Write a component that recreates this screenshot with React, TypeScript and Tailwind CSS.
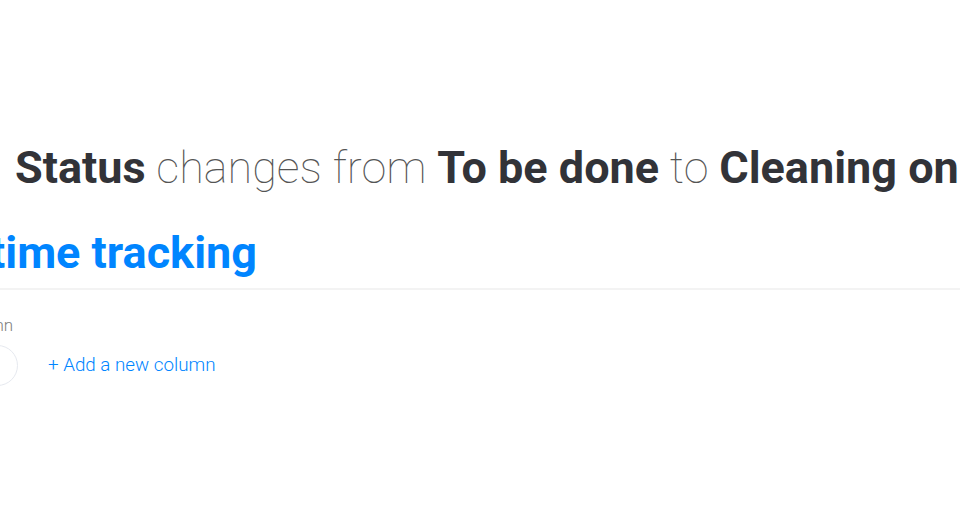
export default function App() {
  return (
    <div className="h-[517px] w-[960px] overflow-hidden bg-white font-['Roboto',sans-serif] text-[#323338]">
      <div className="pt-[136px] pl-[15px] whitespace-nowrap text-[45px] leading-[64px]">
        <span className="font-bold">Status</span>
        <span className="font-thin text-[#555]"> changes from </span>
        <span className="font-bold">To be done</span>
        <span className="font-thin text-[#555]"> to </span>
        <span className="font-bold">Cleaning on</span>
      </div>

      <div className="mt-[23px] ml-[-121px] whitespace-nowrap text-[45px] font-bold leading-[60px] text-[#0085ff]">
        Start time tracking
      </div>

      <div className="mt-[5px] h-[2px] w-full bg-[#f3f3f3]" />

      <div className="ml-[-40px] pt-[25px]">
        <div className="ml-[-5px] text-[17px] font-light leading-[20px] text-[#808080]">Column</div>
        <div className="mt-[10px] flex items-center gap-[30px]">
          <div className="h-[41px] w-[58px] rounded-full border border-[#e6e9ef] bg-white" />
          <button className="text-[18.8px] font-light text-[#0085ff]">+ Add a new column</button>
        </div>
      </div>
    </div>
  )
}
